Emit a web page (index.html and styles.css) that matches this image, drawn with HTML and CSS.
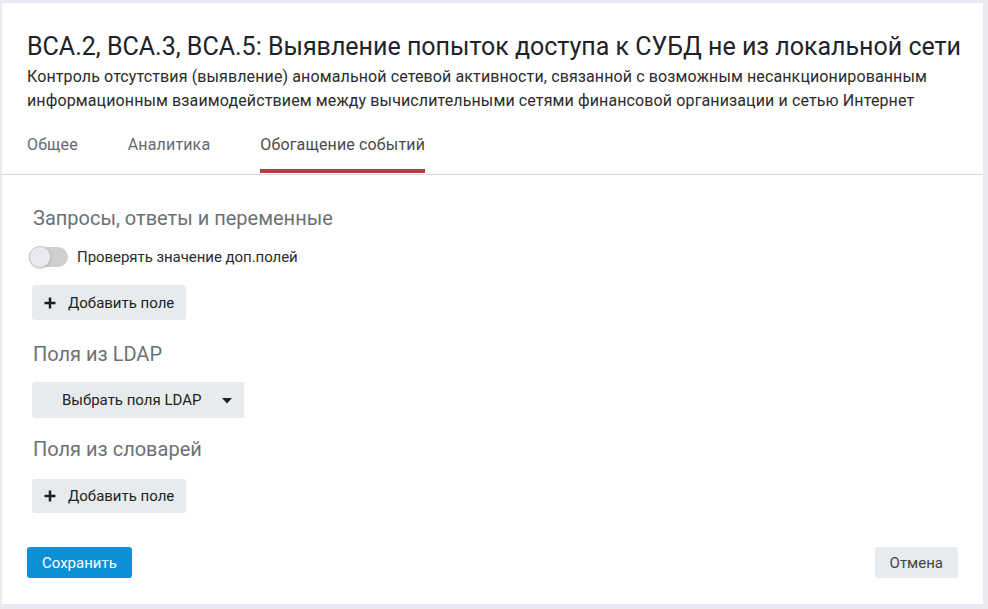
FILE: index.html
```html
<!DOCTYPE html>
<html lang="ru">
<head>
<meta charset="utf-8">
<title>Обогащение событий</title>
<link rel="stylesheet" href="styles.css">
</head>
<body>
<div class="panel">
  <div class="header">
    <h1 class="title">ВСА.2, ВСА.3, ВСА.5: Выявление попыток доступа к СУБД не из локальной сети</h1>
    <p class="subtitle">Контроль отсутствия (выявление) аномальной сетевой активности, связанной с возможным несанкционированным информационным взаимодействием между вычислительными сетями финансовой организации и сетью Интернет</p>
  </div>
  <div class="tabs">
    <div class="tab">Общее</div>
    <div class="tab">Аналитика</div>
    <div class="tab active">Обогащение событий</div>
  </div>
  <div class="content">
    <h2 class="section-title first">Запросы, ответы и переменные</h2>
    <div class="toggle-row">
      <span class="toggle"><span class="knob"></span></span>
      <span class="toggle-label">Проверять значение доп.полей</span>
    </div>
    <button class="btn btn-add"><svg class="plus" viewBox="0 0 12 12" width="12" height="12"><path d="M6 0.5V11.5M0.5 6H11.5" stroke="#1f1f1f" stroke-width="2.5"/></svg>Добавить поле</button>
    <h2 class="section-title second">Поля из LDAP</h2>
    <button class="btn btn-select">Выбрать поля LDAP<svg class="caret" viewBox="0 0 10 6" width="10" height="6"><path d="M0 0H10L5 5.5Z" fill="#222"/></svg></button>
    <h2 class="section-title">Поля из словарей</h2>
    <button class="btn btn-add btn-add2"><svg class="plus" viewBox="0 0 12 12" width="12" height="12"><path d="M6 0.5V11.5M0.5 6H11.5" stroke="#1f1f1f" stroke-width="2.5"/></svg>Добавить поле</button>
  </div>
  <div class="footer">
    <button class="btn btn-primary">Сохранить</button>
    <button class="btn btn-cancel">Отмена</button>
  </div>
</div>
</body>
</html>
```
FILE: styles.css
```css
* { box-sizing: border-box; }
html, body { margin: 0; padding: 0; }
body {
  background: #e9e9ef;
  font-family: Roboto, "Liberation Sans", Arial, sans-serif;
  padding: 3px 5px 5px 2px;
  width: 988px;
  height: 609px;
}
.panel {
  background: #fff;
  width: 981px;
  height: 601px;
  display: flex;
  flex-direction: column;
}
.header { padding: 27px 20px 0 25px; }
.title {
  margin: 0;
  font-size: 25px;
  font-weight: 400;
  line-height: 34px;
  color: #1f2328;
  white-space: nowrap;
}
.subtitle {
  margin: 1px 0 0 0;
  font-size: 16px;
  letter-spacing: 0.12px;
  line-height: 24px;
  color: #2b2b2b;
}
.tabs {
  display: flex;
  gap: 50px;
  padding: 13px 25px 1px 25px;
  border-bottom: 1px solid #dadada;
}
.tab {
  font-size: 16px;
  letter-spacing: 0.15px;
  line-height: 20px;
  color: #666a70;
  padding: 9px 0 14px 0;
  border-bottom: 4px solid transparent;
}
.tab.active {
  color: #4a4a4a;
  border-bottom-color: #b93a3f;
}
.content {
  padding: 0 0 0 30px;
  display: flex;
  flex-direction: column;
  align-items: flex-start;
}
.section-title {
  margin: 19px 0 0 1px;
  font-size: 20px;
  font-weight: 400;
  line-height: 24px;
  color: #6c7178;
}
.section-title.first { margin-top: 31px; }
.section-title.second { margin-top: 22px; }
.toggle-row {
  display: flex;
  align-items: center;
  margin: 15px 0 0 -3px;
  height: 24px;
}
.toggle {
  position: relative;
  width: 39px;
  height: 20px;
  border-radius: 10px;
  background: #cfcfcf;
  margin-right: 9px;
}
.knob {
  position: absolute;
  left: 0;
  top: -1px;
  width: 22px;
  height: 22px;
  border-radius: 50%;
  background: #e8eaee;
  border: 1px solid #c4c4c4;
  box-shadow: 0 1px 2px rgba(0,0,0,0.15);
}
.toggle-label {
  font-size: 15px;
  letter-spacing: -0.05px;
  color: #2b2b2b;
}
.btn {
  font-family: inherit;
  border: none;
  border-radius: 3px;
  display: inline-flex;
  align-items: center;
  cursor: pointer;
}
.btn-add {
  margin-top: 16px;
  height: 35px;
  padding: 0 12px 0 12px;
  background: #e8ebee;
  font-size: 15px;
  color: #222;
}
.btn-add2 { margin-top: 18px; height: 34px; }
.plus { margin-right: 12px; }
.btn-select {
  margin-top: 16px;
  height: 36px;
  padding: 0 12px 0 30px;
  background: #e8ebee;
  font-size: 15px;
  color: #222;
}
.caret { margin-left: 21px; margin-top: 2px; }
.footer {
  margin-top: auto;
  display: flex;
  justify-content: space-between;
  padding: 0 25px 26px 25px;
}
.btn-primary {
  height: 31px;
  padding: 0 15px;
  background: #0b90d8;
  color: #fff;
  font-size: 15px;
}
.btn-cancel {
  height: 31px;
  padding: 0 15px;
  background: #e8ebee;
  color: #444;
  font-size: 15px;
}
```
